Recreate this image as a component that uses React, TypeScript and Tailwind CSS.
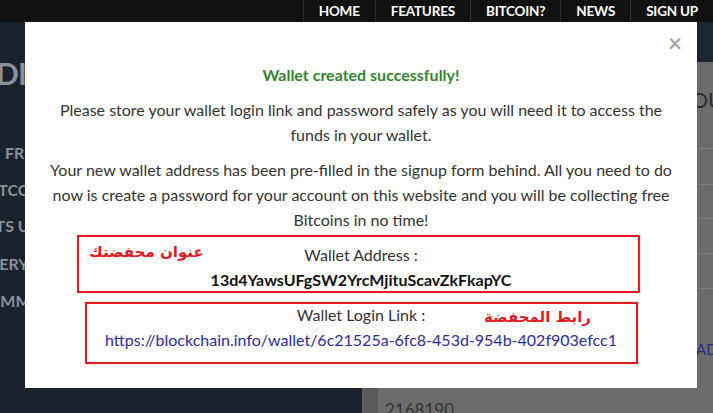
import React from "react";

const NAV = ["HOME", "FEATURES", "BITCOIN?", "NEWS", "SIGN UP"];

// sidebar entries sit behind the modal, only their left ends peek out
const SIDE = [
  { label: "FREE BITCOINS", cls: "mt-[56px] ml-[5px]" },
  { label: "BITCOIN FAUCET", cls: "mt-[19px] -ml-[17px]" },
  { label: "POSTS USERS", cls: "mt-[18px] -ml-[36px]" },
  { label: "GALLERY", cls: "mt-[20px] -ml-[40px]" },
  { label: "COMMISSION", cls: "mt-[19px] -ml-[23px]" },
];

function Annotation({ className, label, labelClass }: { className: string; label: string; labelClass: string }) {
  return (
    <div className={"absolute border-2 border-[#e31b1f] shadow-[0_0_1px_#ff8080] " + className}>
      <span
        dir="rtl"
        className={"absolute font-bold text-[#e31b1f] text-[15px] leading-none whitespace-nowrap " + labelClass}
        style={{ fontFamily: '"DejaVu Sans", sans-serif' }}
      >
        {label}
      </span>
    </div>
  );
}

export default function App() {
  return (
    <div className="relative w-[713px] h-[413px] overflow-hidden bg-[#1a222c] font-['Lato',sans-serif]">
      {/* top nav */}
      <div className="flex justify-end h-[22px] bg-[#111111]">
        {NAV.map((n) => (
          <div key={n} className="flex items-center px-[15px] border-l border-[#2e2e2e] text-white font-bold text-[13.5px] tracking-[-0.2px] whitespace-nowrap">
            {n}
          </div>
        ))}
      </div>

      {/* page behind the modal */}
      <div className="flex h-[391px]">
        <div className="w-[362px] shrink-0 flex flex-col text-[#89909a] font-bold">
          <div className="mt-[36px] -ml-[4px] text-[30px] leading-[30px] tracking-tight whitespace-nowrap">DICE</div>
          {SIDE.map((s) => (
            <div key={s.label} className={"text-[16px] leading-[18px] whitespace-nowrap " + s.cls}>
              {s.label}
            </div>
          ))}
        </div>
        <div className="flex-1 min-w-0 flex flex-col overflow-hidden">
          <div className="h-[40px] shrink-0 bg-[#1c2631]" />
          <div className="flex-1 flex bg-[#5a5a5a]">
            <div className="w-[16px] shrink-0" />
            <div className="flex-1 min-w-0 flex flex-col bg-[#6c6c6c] text-[#2b2b2b]">
              <div className="h-[86px] shrink-0 pl-[301px] pt-[22px] text-[21px] whitespace-nowrap">YOUR</div>
              <div className="h-[36px] shrink-0 border-t border-[#7c7c7c]" />
              <div className="h-[34px] shrink-0 border-t border-[#7c7c7c]" />
              <div className="h-[35px] shrink-0 border-t border-[#7c7c7c]" />
              <div className="h-[35px] shrink-0 border-t border-[#7c7c7c]" />
              <div className="h-[80px] shrink-0 border-t border-[#7c7c7c] pl-[318px] pt-[49px] text-[#232a80] text-[15px] whitespace-nowrap">ADD</div>
              <div className="pl-[7px] pt-[29px] text-[#363636] text-[17px]">2168190</div>
            </div>
          </div>
        </div>
      </div>

      {/* modal */}
      <div className="absolute left-[25px] top-[22px] w-[672px] h-[366px] bg-white text-[#333] text-[16px] leading-[25px] text-center">
        <button className="absolute right-[15px] top-[9px] text-[#a8a8a8] text-[24px] font-bold leading-[24px]">×</button>
        <div className="pt-[40px] flex flex-col gap-[10px]">
          <div className="font-bold text-[#33862d]">Wallet created successfully!</div>
          <div>
            Please store your wallet login link and password safely as you will need it to access the
            <br />
            funds in your wallet.
          </div>
          <div>
            Your new wallet address has been pre-filled in the signup form behind. All you need to do
            <br />
            now is create a password for your account on this website and you will be collecting free
            <br />
            Bitcoins in no time!
          </div>
          <div>
            Wallet Address :
            <br />
            <span className="font-bold text-[#111]">13d4YawsUFgSW2YrcMjituScavZkFkapYC</span>
          </div>
          <div>
            Wallet Login Link :
            <br />
            <span className="text-[#2b2ca3]">https://blockchain.info/wallet/6c21525a-6fc8-453d-954b-402f903efcc1</span>
          </div>
        </div>

        <Annotation className="left-[52px] top-[213px] w-[563px] h-[58px]" label="عنوان محفضتك" labelClass="left-[10px] top-[8px]" />
        <Annotation className="left-[60px] top-[280px] w-[553px] h-[62px]" label="رابط المحفضة" labelClass="left-[397px] top-[6px]" />
      </div>
    </div>
  );
}
